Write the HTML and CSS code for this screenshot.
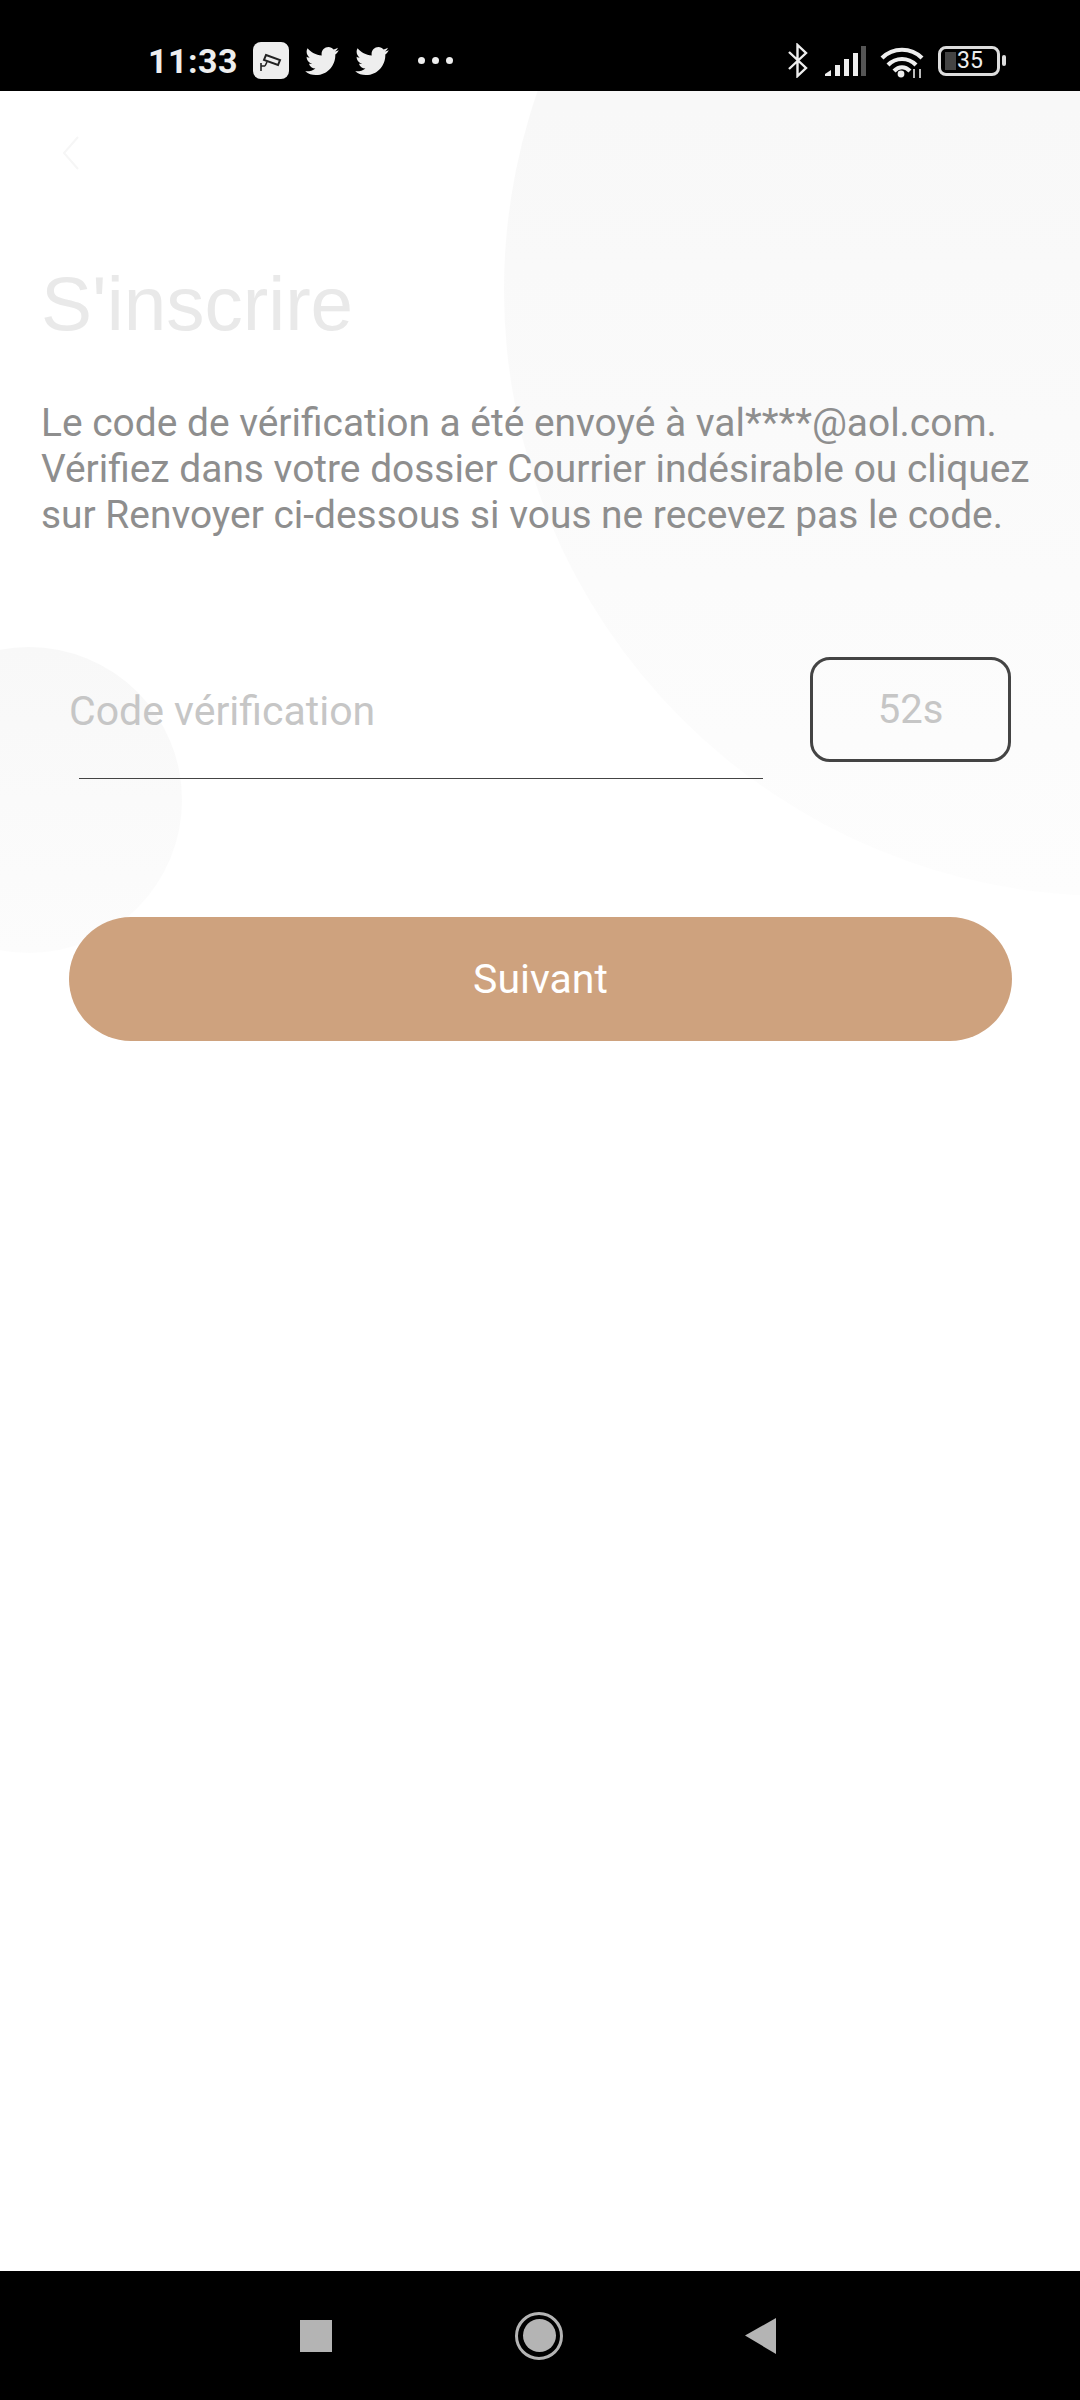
FILE: index.html
```html
<!DOCTYPE html>
<html lang="fr">

<head>
    <meta charset="UTF-8" />
    <title>S'inscrire</title>
    <link rel="stylesheet" href="styles.css">
</head>

<body>
    <div id="phone">

        <!-- Barre d'état -->
        <div class="status-bar">
            <div class="status-left">
                <span class="time">11:33</span>
                <span class="notif-box">
                    <svg width="26" height="26" viewBox="0 0 26 26">
                        <path d="M8 7 L22 12 L20 17 L6 12 Z" fill="none" stroke="#222" stroke-width="2" />
                        <path d="M9 14 L7 18 M7 18 L3 18 M3 15 L3 23" fill="none" stroke="#222" stroke-width="1.6" />
                    </svg>
                </span>
                <svg class="bird" width="34" height="28" viewBox="0 0 24 20">
                    <path d="M24 2.4c-.9.4-1.800.7-2.800.8 1-.6 1.800-1.600 2.200-2.700-1 .6-2 1-3.100 1.200C19.300.7 18 0 16.600 0c-2.700 0-4.900 2.200-4.900 4.900 0 .4 0 .8.100 1.100C7.700 5.800 4.100 3.900 1.700.9 1.200 1.600 1 2.500 1 3.400c0 1.700.9 3.200 2.200 4.100-.8 0-1.600-.2-2.200-.6v.1c0 2.400 1.700 4.400 3.900 4.800-.4.1-.8.200-1.300.200-.3 0-.6 0-.9-.1.600 2 2.400 3.400 4.600 3.400-1.700 1.300-3.800 2.100-6.100 2.100-.4 0-.8 0-1.200-.1C2.200 19.200 4.800 20 7.500 20c9.100 0 14-7.500 14-14v-.6c1-.7 1.800-1.600 2.500-3z" fill="#eee" />
                </svg>
                <svg class="bird" width="34" height="28" viewBox="0 0 24 20">
                    <path d="M24 2.4c-.9.4-1.800.7-2.800.8 1-.6 1.800-1.600 2.200-2.700-1 .6-2 1-3.100 1.200C19.300.7 18 0 16.600 0c-2.700 0-4.900 2.200-4.900 4.900 0 .4 0 .8.100 1.100C7.700 5.800 4.100 3.900 1.700.9 1.200 1.600 1 2.500 1 3.400c0 1.700.9 3.200 2.200 4.100-.8 0-1.600-.2-2.200-.6v.1c0 2.400 1.700 4.400 3.900 4.800-.4.1-.8.200-1.300.200-.3 0-.6 0-.9-.1.600 2 2.400 3.400 4.600 3.400-1.700 1.300-3.800 2.100-6.100 2.100-.4 0-.8 0-1.200-.1C2.200 19.200 4.800 20 7.500 20c9.100 0 14-7.500 14-14v-.6c1-.7 1.800-1.600 2.500-3z" fill="#eee" />
                </svg>
                <span class="dots"><i></i><i></i><i></i></span>
            </div>
            <div class="status-right">
                <svg width="22" height="35" viewBox="0 0 22 35">
                    <path d="M2 9 L19 25 L10.500 33 L10.500 2 L19 10 L2 26" fill="none" stroke="#eee" stroke-width="2.400" />
                </svg>
                <svg class="signal" width="41" height="30" viewBox="0 0 41 30">
                    <path d="M0 30 H6 V24 L0 28 Z" fill="#eee" />
                    <rect x="10" y="19" width="5" height="11" fill="#eee" />
                    <rect x="19" y="13" width="5" height="17" fill="#eee" />
                    <rect x="28" y="7" width="5" height="23" fill="#eee" />
                    <rect x="36" y="0" width="5" height="30" fill="#555" />
                </svg>
                <svg class="wifi" width="46" height="34" viewBox="0 0 46 34">
                    <path d="M2 13 C13 2 31 2 42 13 M8 20 C16 12 28 12 36 20 M14 26 C19 21 25 21 30 26" fill="none" stroke="#eee" stroke-width="4.200" />
                    <circle cx="21" cy="29" r="3.400" fill="#eee" />
                    <path d="M34 24 V33 M40 24 V33" stroke="#bbb" stroke-width="2" />
                </svg>
                <span class="battery">
                    <span class="battery-fill"></span>
                    <span class="battery-num">35</span>
                </span>
                <span class="battery-nub"></span>
            </div>
        </div>

        <!-- Contenu -->
        <div class="screen">
            <div class="deco deco-big"></div>
            <div class="deco deco-small"></div>

            <div class="content">
                <svg class="back" width="18" height="34" viewBox="0 0 18 34">
                    <path d="M16 1 L2 17 L16 33" fill="none" stroke="#f6f6f6" stroke-width="2" />
                </svg>

                <h1>S'inscrire</h1>

                <p class="info">Le code de vérification a été envoyé à val****@aol.com.
                    Vérifiez dans votre dossier Courrier indésirable ou cliquez
                    sur Renvoyer ci-dessous si vous ne recevez pas le code.</p>

                <div class="code-row">
                    <div class="code-field">
                        <span class="placeholder">Code vérification</span>
                    </div>
                    <div class="timer">52s</div>
                </div>

                <button class="next">Suivant</button>
            </div>
        </div>

        <!-- Barre de navigation -->
        <div class="nav-bar">
            <span class="nav-square"></span>
            <span class="nav-home"><i></i></span>
            <svg width="31" height="36" viewBox="0 0 31 36">
                <path d="M0 17.500 L31 0 V36 Z" fill="#b4b4b4" />
            </svg>
        </div>

    </div>
</body>

</html>
```

FILE: styles.css
```css
body {
    margin: 0;
    background: #fff;
    font-family: Roboto, "Liberation Sans", sans-serif;
}

#phone {
    width: 1080px;
    height: 2400px;
    display: flex;
    flex-direction: column;
    overflow: hidden;
}

/* Barre d'état */
.status-bar {
    height: 91px;
    flex: none;
    background: #000;
    display: flex;
    justify-content: space-between;
    align-items: center;
    padding: 30px 74px 0 148px;
    box-sizing: border-box;
    color: #eee;
}

.status-left,
.status-right {
    display: flex;
    align-items: center;
}

.time {
    font-size: 34px;
    font-weight: 700;
    letter-spacing: 0.5px;
    width: 105px;
}

.notif-box {
    width: 36px;
    height: 37px;
    background: #eee;
    border-radius: 8px;
    display: flex;
    align-items: center;
    justify-content: center;
    margin-right: 16px;
}

.bird {
    margin-right: 16px;
}

.dots {
    display: flex;
    gap: 7px;
    margin-left: 13px;
}

.dots i {
    width: 7px;
    height: 7px;
    border-radius: 50%;
    background: #eee;
}

.signal {
    margin-left: 16px;
}

.wifi {
    margin-left: 14px;
    margin-top: 3px;
}

.battery {
    position: relative;
    width: 62px;
    height: 30px;
    margin-left: 12px;
    border: 3px solid #ddd;
    border-radius: 8px;
    box-sizing: border-box;
    display: flex;
    align-items: center;
    justify-content: center;
}

.battery-fill {
    position: absolute;
    left: 4px;
    top: 3px;
    bottom: 3px;
    width: 11px;
    background: #444;
}

.battery-num {
    position: relative;
    font-size: 23px;
    color: #eee;
    margin-left: 2px;
}

.battery-nub {
    width: 4px;
    height: 11px;
    margin-left: 2px;
    background: #ddd;
    border-radius: 2px;
}

/* Contenu */
.screen {
    position: relative;
    flex: 1;
    overflow: hidden;
    background: #fff;
}

.deco {
    position: absolute;
    border-radius: 50%;
}

.deco-big {
    left: 504px;
    top: -407px;
    width: 1212px;
    height: 1212px;
    background: linear-gradient(#f8f8f8 35%, #fdfdfd 100%);
}

.deco-small {
    left: -124px;
    top: 556px;
    width: 306px;
    height: 306px;
    background: linear-gradient(#f8f8f8, #fcfcfc);
}

.content {
    position: relative;
    padding: 45px 69px 0 41px;
}

.back {
    display: block;
    margin-left: 21px;
}

h1 {
    margin: 91px 0 0;
    font-family: "Liberation Sans", Arial, sans-serif;
    font-size: 76.500px;
    font-weight: 400;
    line-height: 86px;
    color: #e9e9e9;
}

.info {
    margin: 53px 0 0;
    width: 1030px;
    font-size: 38.900px;
    line-height: 46px;
    color: #8e8e8e;
}

.code-row {
    display: flex;
    justify-content: space-between;
    margin: 119px 0 0 28px;
}

.code-field {
    width: 684px;
    height: 122px;
    box-sizing: border-box;
    padding-top: 30px;
    border-bottom: 1px solid #444;
    margin-left: 10px;
}

.placeholder {
    display: block;
    margin-left: -10px;
    font-size: 41px;
    line-height: 48px;
    color: #c6c6c6;
}

.timer {
    width: 201px;
    height: 105px;
    box-sizing: border-box;
    border: 3px solid #444;
    border-radius: 20px;
    display: flex;
    align-items: center;
    justify-content: center;
    font-size: 40px;
    color: #c6c6c6;
}

.next {
    display: block;
    width: 943px;
    height: 124px;
    margin: 138px 0 0 28px;
    border: none;
    border-radius: 62px;
    background: #cea27e;
    color: #fff;
    font-family: Roboto, sans-serif;
    font-size: 41px;
}

/* Barre de navigation */
.nav-bar {
    height: 129px;
    flex: none;
    background: #000;
    display: flex;
    align-items: center;
    box-sizing: border-box;
    padding: 0 0 0 300px;
}

.nav-square {
    width: 32px;
    height: 32px;
    background: #b4b4b4;
    margin-right: 183px;
}

.nav-home {
    width: 48px;
    height: 48px;
    box-sizing: border-box;
    border: 3px solid #b4b4b4;
    border-radius: 50%;
    display: flex;
    align-items: center;
    justify-content: center;
    margin-right: 182px;
}

.nav-home i {
    width: 33px;
    height: 33px;
    flex: none;
    border-radius: 50%;
    background: #b4b4b4;
}
```
